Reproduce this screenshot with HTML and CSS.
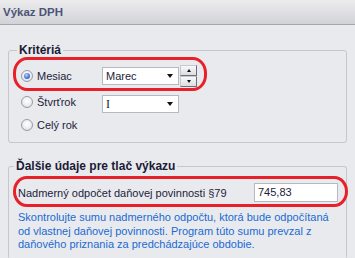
FILE: index.html
```html
<!DOCTYPE html>
<html>
<head>
<meta charset="utf-8">
<link rel="stylesheet" href="styles.css">
</head>
<body>
<div class="window">
  <div class="titlebar">Výkaz DPH</div>
  <div class="content">
    <fieldset class="group group-criteria">
      <legend>Kritériá</legend>
      <div class="row row-month">
        <label class="radio-label"><span class="radio checked"></span>Mesiac</label>
        <div class="combo"><span>Marec</span><span class="arrow"></span></div>
        <div class="spin">
          <div class="spin-btn"><span class="up"></span></div>
          <div class="spin-btn"><span class="down"></span></div>
        </div>
      </div>
      <div class="row row-quarter">
        <label class="radio-label"><span class="radio"></span>Štvrťrok</label>
        <div class="combo"><span class="serif-i">I</span><span class="arrow"></span></div>
      </div>
      <div class="row row-year">
        <label class="radio-label"><span class="radio"></span>Celý rok</label>
      </div>
    </fieldset>
    <fieldset class="group group-print">
      <legend>Ďalšie údaje pre tlač výkazu</legend>
      <div class="row row-amount">
        <span class="field-label">Nadmerný odpočet daňovej povinnosti §79</span>
        <div class="textbox">745,83</div>
      </div>
      <p class="hint">Skontrolujte sumu nadmerného odpočtu, ktorá bude odpočítaná<br>od vlastnej daňovej povinnosti. Program túto sumu prevzal z<br>daňového priznania za predchádzajúce obdobie.</p>
    </fieldset>
  </div>
  <div class="mark mark-month"></div>
  <div class="mark mark-amount"></div>
</div>
</body>
</html>
```
FILE: styles.css
```css
* { box-sizing: border-box; }
html, body { margin: 0; padding: 0; }
body {
  width: 355px;
  height: 258px;
  overflow: hidden;
  background: #e9eaee;
  font-family: "Liberation Sans", Arial, sans-serif;
  font-size: 11px;
  color: #1c1c3a;
}
.window { position: relative; width: 355px; height: 258px; overflow: hidden; }
.titlebar {
  height: 25px;
  padding: 3px 0 0 3px;
  background: linear-gradient(#ececee, #d2d3d7);
  border-bottom: 1px solid #a6a7ab;
  font-weight: bold;
  font-size: 11.5px;
  color: #4d5378;
  line-height: 18px;
}
.content { padding: 18px 8px 0 8px; }
.group {
  margin: 0;
  border: 1px solid #c5c7cd;
  border-radius: 3px;
  padding: 0 8px 0 12px;
}
.group legend {
  padding: 0 2px;
  margin-left: -4px;
  font-weight: bold;
  font-size: 12px;
  line-height: 14px;
  color: #1b1b36;
}
.group-criteria { padding-top: 8px; padding-bottom: 8px; }
.row { display: flex; align-items: center; }
.row-month { height: 22px; }
.row-quarter { height: 22px; margin-top: 6px; }
.row-year { height: 18px; margin-top: 1px; }
.radio-label { display: flex; align-items: center; width: 81px; }
.row-quarter .radio-label { margin-top: -5px; }
.radio {
  width: 12px; height: 12px;
  border-radius: 50%;
  margin-right: 4px;
  border: 1px solid #9a9ca4;
  background: radial-gradient(circle at 50% 40%, #ffffff 0, #eceef2 55%, #c9cbd1 100%);
  position: relative;
}
.radio.checked::after {
  content: "";
  position: absolute;
  left: 2px; top: 2px;
  width: 6px; height: 6px;
  border-radius: 50%;
  background: radial-gradient(circle at 40% 35%, #b9d3ff 0, #3f74d6 60%, #2a4fa6 100%);
}
.combo {
  width: 77px; height: 18px;
  background: #fff;
  border: 1px solid #b7b9c0;
  display: flex; align-items: center; justify-content: space-between;
  padding: 0 5px 0 3px;
  font-size: 11px;
}
.serif-i { font-family: "Liberation Serif", serif; font-size: 12px; }
.arrow {
  width: 0; height: 0;
  border-left: 3.5px solid transparent;
  border-right: 3.5px solid transparent;
  border-top: 4px solid #111;
}
.spin { display: flex; flex-direction: column; margin-left: 1px; }
.spin-btn {
  width: 17px; height: 11px;
  background: linear-gradient(#f9f9fa, #dcdde2);
  border: 1px solid #c8c9ce;
  border-right-color: #6f7075;
  border-bottom-color: #6f7075;
  display: flex; align-items: center; justify-content: center;
}
.up {
  width: 0; height: 0;
  border-left: 2.5px solid transparent; border-right: 2.5px solid transparent;
  border-bottom: 3px solid #111;
}
.down {
  width: 0; height: 0;
  border-left: 2.5px solid transparent; border-right: 2.5px solid transparent;
  border-top: 3px solid #111;
}
.group-criteria + .group-print { margin-top: 16px; }
.group-print { padding-left: 9px; height: 99px; padding-top: 6px; border-bottom-color: transparent; border-bottom-left-radius: 0; border-bottom-right-radius: 0; }
.row-amount { justify-content: space-between; height: 19px; margin-top: 4px; }
.field-label { font-size: 11px; }
.textbox {
  width: 84px; height: 19px;
  background: #fff;
  border: 1px solid #b7b9c0;
  padding: 0 3px;
  line-height: 17px;
  font-size: 11px;
}
.hint {
  margin: 9px 0 0 0;
  color: #1a6bd2;
  line-height: 13.5px;
  font-size: 11px;
  white-space: nowrap;
}
.mark {
  position: absolute;
  border: 3px solid #e8202a;
  border-radius: 14px / 16px;
}
.mark-month { left: 13px; top: 57px; width: 194px; height: 34px; }
.mark-amount { left: 13px; top: 176px; width: 335px; height: 31px; }
```
